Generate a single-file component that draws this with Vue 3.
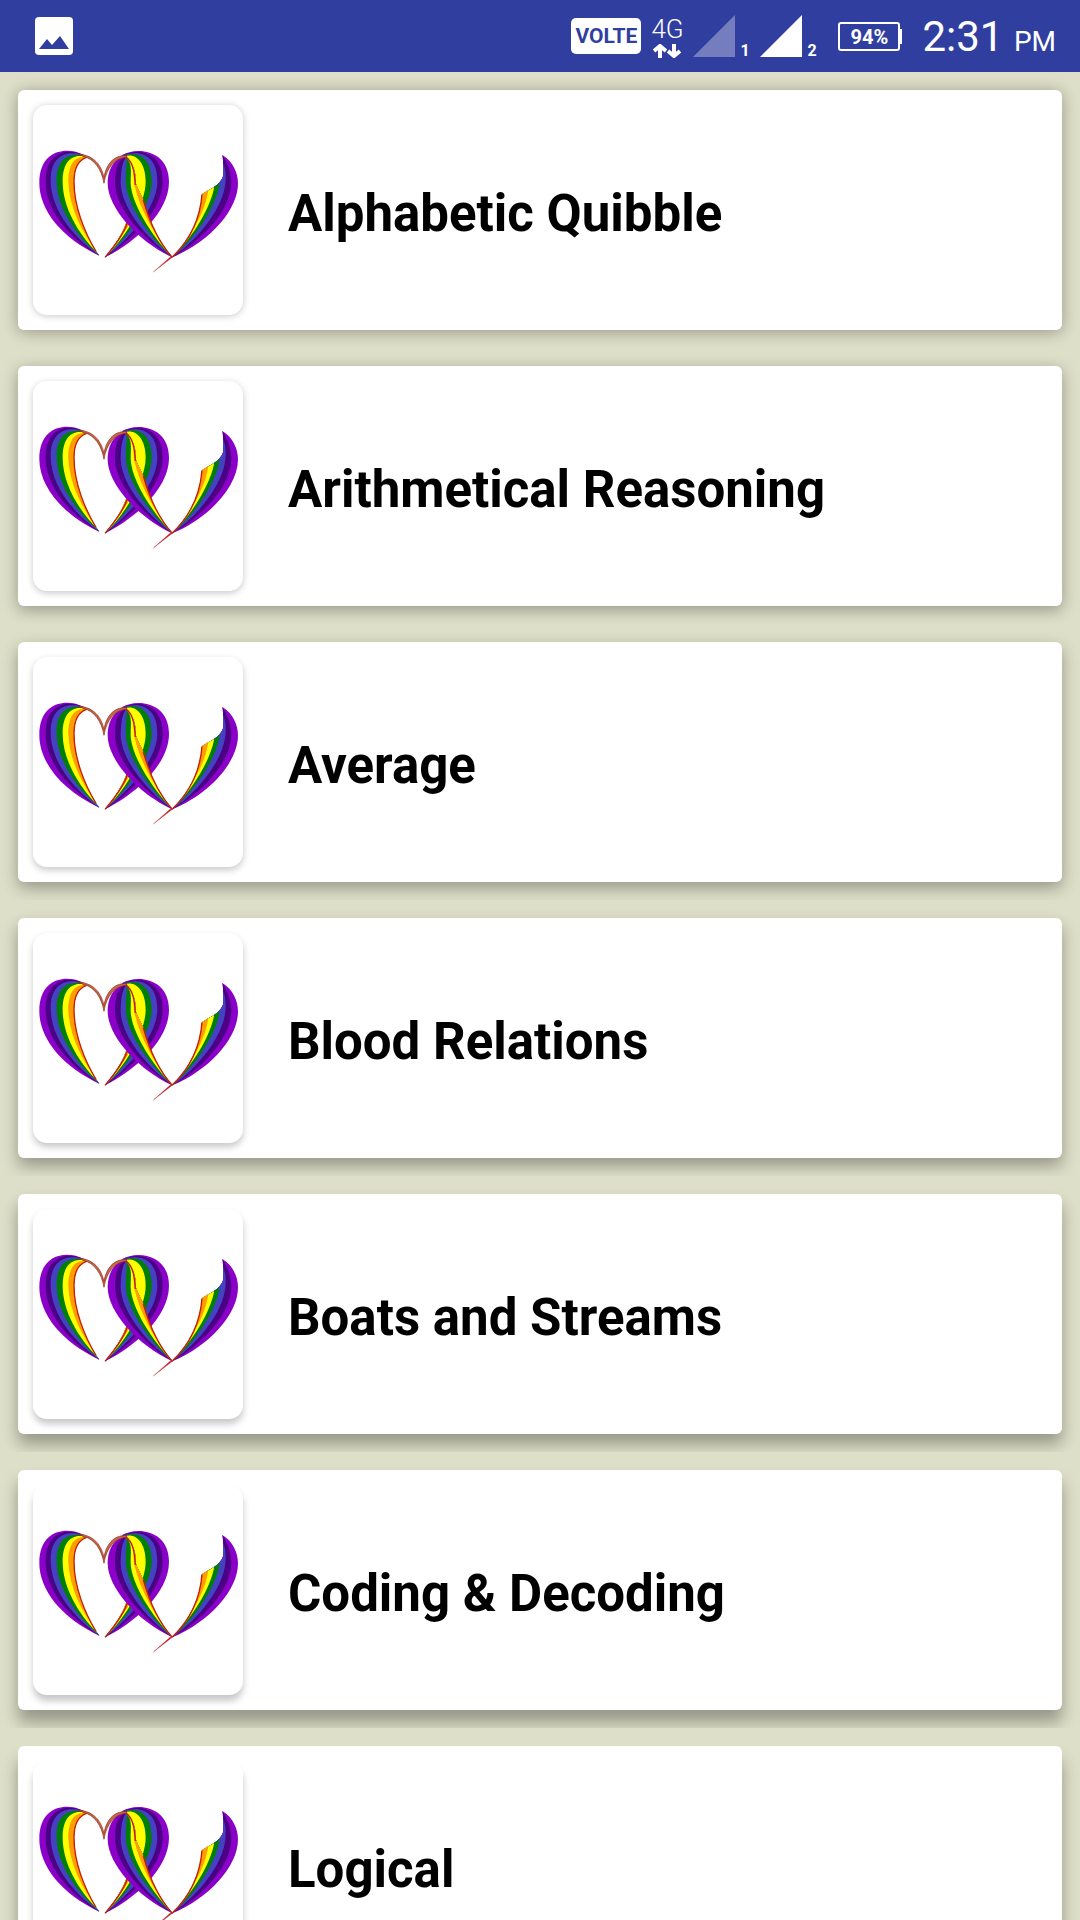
<script setup>
const topics = [
  'Alphabetic Quibble',
  'Arithmetical Reasoning',
  'Average',
  'Blood Relations',
  'Boats and Streams',
  'Coding & Decoding',
  'Logical',
]

// Shadows fall further the lower a card sits on the screen.
const shadowDrop = (index) => ({
  '--drop': `${2 + index * 2}px`,
  '--thumb-drop': `${1 + index}px`,
})

const colours = ['#8b00c8', '#4b0085', '#4343c2', '#008000', '#ffff00', '#ff9c00']

// Each ribbon is painted from its outer edge inwards, one colour over the last.
const ribbon = (edges, inner) => edges.map((d, i) => ({ d: `${d} ${inner} Z`, fill: colours[i] }))

const leftRibbon = ribbon(
  [
    'M230 232 C200 203 88 190 88 310 C88 390 155 475 268 527',
    'M230 232 C200 208 107 195 107 305 C107 385 168 468 268 527',
    'M230 232 C205 213 122 203 122 300 C122 380 176 460 268 527',
    'M230 232 C205 220 140 215 140 300 C140 380 192 460 266 524',
    'M230 232 C205 222 158 225 158 305 C158 380 203 460 264 521',
    'M230 232 C205 228 175 240 175 305 C178 380 212 450 262 518',
  ],
  'L258 514 C225 460 192 380 192 305 C192 265 205 240 230 232',
)

const backRibbon = ribbon(
  [
    'M335 226 C380 198 477 210 477 305 C477 400 370 490 285 532',
    'M338 226 C380 206 458 210 458 305 C458 390 365 480 285 532',
    'M340 226 C380 212 442 215 442 305 C442 380 360 475 285 532',
    'M342 228 C380 212 425 230 425 305 C425 370 355 470 285 532',
    'M344 230 C370 218 407 240 407 305 C407 365 355 465 285 532',
    'M346 300 C365 330 388 340 388 355 C385 400 345 460 285 532',
  ],
  'C325 485 350 440 356 400 C360 340 355 270 345 232',
)

const frontRibbon = ribbon(
  [
    'M350 230 C315 230 293 265 293 310 C293 385 385 485 487 532',
    'M350 230 C325 235 314 265 315 310 C318 385 395 475 487 532',
    'M350 230 C338 240 332 270 332 310 C334 380 403 470 487 532',
    'M350 230 C352 245 347 270 348 310 C350 370 412 465 487 532',
    'M346 230 C368 250 362 270 362 310 C364 370 423 465 487 532',
    'M346 230 C380 260 366 290 376 325 C390 385 432 465 487 532',
  ],
  'C440 480 414 410 400 360 C385 325 372 310 376 285 C373 265 365 245 346 230',
)

const rightRibbon = ribbon(
  [
    'M637 225 C670 245 684 280 684 310 C684 390 600 485 487 532',
    'M637 225 C656 255 664 280 664 310 C662 390 580 480 487 532',
    'M637 245 C648 265 648 290 646 310 C640 380 570 475 487 532',
    'M632 270 C630 290 628 300 627 320 C615 380 560 470 487 532',
    'M614 290 L612 325 C600 385 550 470 487 532',
    'M597 300 L594 335 C588 385 545 470 487 532',
  ],
  'C535 485 570 420 576 345 L576 300',
)
</script>

<template>
  <div class="screen">
    <header class="status">
      <svg class="photo" viewBox="0 0 38 38" aria-hidden="true">
        <rect width="38" height="38" rx="4" fill="#fff" />
        <path d="M4 32 L12 22 L17 28 L25 19 L34 32 Z" fill="#303f9f" />
      </svg>
      <div class="network">
        <span class="volte">VOLTE</span>
        <div class="data">
          <span class="generation">4G</span>
          <svg class="arrows" viewBox="0 0 28 14" aria-hidden="true">
            <path d="M1 7 L7 2 L13 7 M7 3 V14 M15 7 L21 12 L27 7 M21 11 V0" fill="none" stroke="#fff" stroke-width="4" />
          </svg>
        </div>
        <div class="sim">
          <svg class="signal" viewBox="0 0 42 42" aria-hidden="true">
            <path d="M42 0 V42 H0 Z" fill="#747ebe" />
          </svg>
          <span>1</span>
        </div>
        <div class="sim">
          <svg class="signal" viewBox="0 0 42 42" aria-hidden="true">
            <path d="M42 0 V42 H0 Z" fill="#fff" />
          </svg>
          <span>2</span>
        </div>
      </div>
      <div class="battery">94%</div>
      <div class="clock">2:31 <small>PM</small></div>
    </header>

    <main>
      <ul class="topics">
        <li v-for="(topic, index) in topics" :key="topic" :style="shadowDrop(index)">
          <button class="card" type="button">
            <span class="thumb">
              <svg viewBox="69 75 630 630" aria-hidden="true">
                <defs>
                  <clipPath :id="`cut-${index}`">
                    <path d="M637 225 C642 250 637 270 640 287 C628 320 600 325 573 345 L480 540 H700 V200 Z" />
                  </clipPath>
                </defs>
                <path v-for="band in backRibbon" :key="band.d" :d="band.d" :fill="band.fill" />
                <path class="edge" d="M285 532 C325 485 348 450 354 420" />
                <path v-for="band in leftRibbon" :key="band.d" :d="band.d" :fill="band.fill" />
                <path class="edge" d="M258 514 C225 460 192 380 192 305 C192 265 205 240 230 232" />
                <path v-for="band in frontRibbon" :key="band.d" :d="band.d" :fill="band.fill" />
                <path class="edge" d="M487 532 C440 480 414 410 400 360 M376 315 C374 280 370 245 346 230" />
                <path
                  d="M205 222 C255 226 274 258 282 292 C288 255 310 224 350 227 L350 232 C315 234 290 262 282 310 C275 268 252 236 222 230 Z"
                  fill="#c06a48"
                  stroke="#8f2418"
                  stroke-width="2"
                />
                <g :clip-path="`url(#cut-${index})`">
                  <path v-for="band in rightRibbon" :key="band.d" :d="band.d" :fill="band.fill" />
                </g>
                <path class="edge" d="M576 343 C570 420 535 485 487 531" />
                <path d="M492 528 L430 576 L480 532 Z" fill="#c0202a" stroke="#c0202a" stroke-width="1" />
              </svg>
            </span>
            <span class="title">{{ topic }}</span>
          </button>
        </li>
      </ul>
    </main>
  </div>
</template>

<style>
body {
  background: #dddfc8;
}
</style>

<style scoped>
.screen {
  display: flex;
  flex-direction: column;
  height: 100vh;
  overflow: hidden;
  background: #dddfc8;
  font-family: Roboto, "Liberation Sans", sans-serif;
}

.status {
  display: flex;
  flex: none;
  align-items: center;
  box-sizing: border-box;
  height: 72px;
  padding: 0 24px 0 35px;
  background: #303f9f;
  color: #fff;
}

.photo {
  width: 38px;
  height: 38px;
}

.network {
  display: flex;
  align-items: center;
  gap: 10px;
  margin-left: auto;
}

.volte {
  width: 70px;
  border-radius: 5px;
  background: #fff;
  color: #303f9f;
  font-size: 21px;
  font-weight: 700;
  line-height: 36px;
  text-align: center;
}

.data {
  display: flex;
  flex-direction: column;
  align-items: center;
  gap: 2px;
  width: 32px;
  padding-top: 2px;
}

.generation {
  font-size: 26px;
  font-weight: 300;
  line-height: 26px;
}

.arrows {
  width: 28px;
  height: 14px;
}

.sim {
  display: flex;
  align-items: flex-end;
  gap: 5px;
  width: 57px;
  font-size: 16px;
  font-weight: 700;
  line-height: 12px;
}

.signal {
  width: 42px;
  height: 42px;
}

.battery {
  position: relative;
  box-sizing: border-box;
  width: 62px;
  height: 29px;
  margin: 0 22px 0 21px;
  border: 2px solid #fff;
  border-radius: 3px;
  font-size: 20px;
  font-weight: 700;
  line-height: 27px;
  text-align: center;
}

.battery::after {
  content: "";
  position: absolute;
  top: 5px;
  right: -4px;
  width: 3px;
  height: 15px;
  background: #fff;
}

.clock {
  padding-top: 6px;
  font-size: 42px;
  line-height: 66px;
  white-space: nowrap;
}

.clock small {
  font-size: 28px;
}

main {
  flex: 1;
  min-height: 0;
  overflow-y: auto;
  scrollbar-width: none;
}

.topics {
  margin: 0;
  padding: 0;
  list-style: none;
}

.topics li {
  padding: 18px;
  overflow: hidden;
}

.card {
  display: flex;
  align-items: center;
  gap: 45px;
  width: 100%;
  padding: 15px;
  border: 0;
  border-radius: 6px;
  background: #fff;
  box-shadow: 0 var(--drop) 16px rgba(0, 0, 0, 0.32);
  color: #000;
  font-family: inherit;
  text-align: left;
}

.thumb {
  flex: none;
  width: 210px;
  height: 210px;
  border-radius: 14px;
  background: #fff;
  box-shadow: 0 var(--thumb-drop) 7px rgba(0, 0, 0, 0.22);
}

.thumb svg {
  display: block;
  width: 100%;
  height: 100%;
}

.edge {
  fill: none;
  stroke: #c41e0a;
  stroke-width: 4;
}

.title {
  padding-top: 7px;
  font-size: 51px;
  font-weight: 700;
  line-height: 60px;
}
</style>
